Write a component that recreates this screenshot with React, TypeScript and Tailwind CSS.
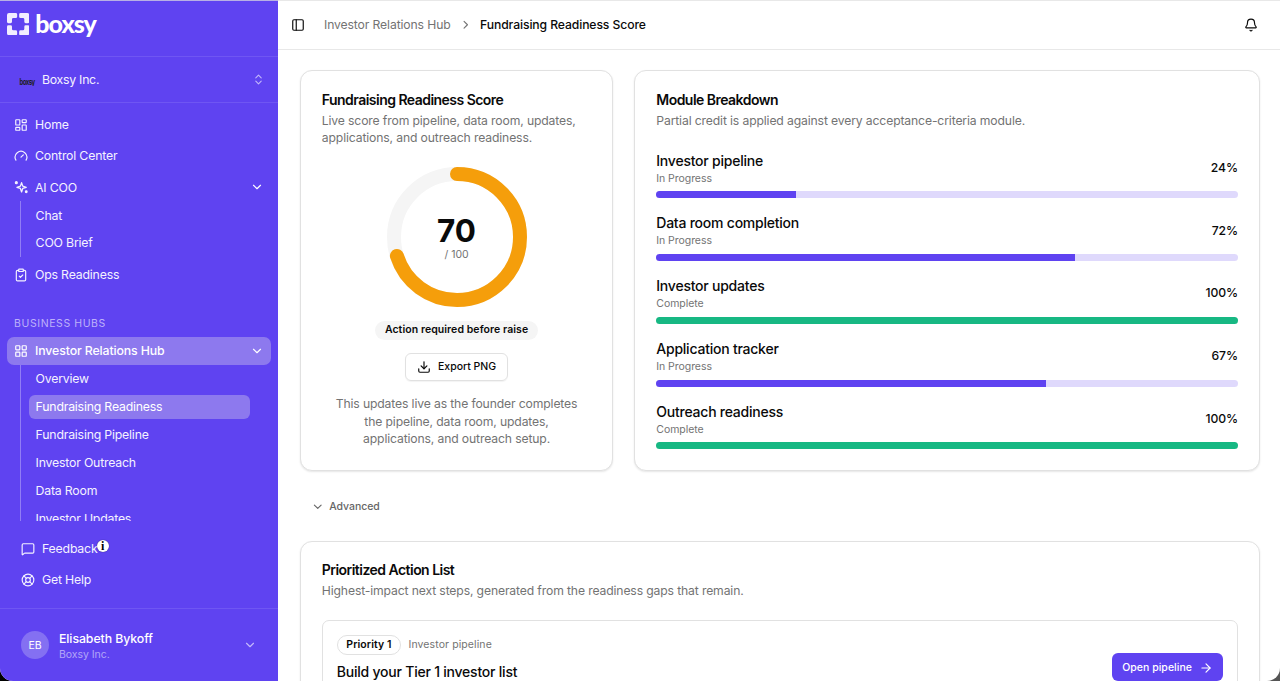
import {
  ArrowRight,
  Bell,
  ChevronDown,
  ChevronRight,
  ChevronsUpDown,
  ClipboardCheck,
  Download,
  Gauge,
  LayoutDashboard,
  LayoutGrid,
  LifeBuoy,
  MessageSquare,
  PanelLeft,
} from 'lucide-react';
import type { ReactNode } from 'react';

const modules = [
  { name: 'Investor pipeline', status: 'In Progress', value: 24 },
  { name: 'Data room completion', status: 'In Progress', value: 72 },
  { name: 'Investor updates', status: 'Complete', value: 100 },
  { name: 'Application tracker', status: 'In Progress', value: 67 },
  { name: 'Outreach readiness', status: 'Complete', value: 100 },
];

const hubLinks = [
  'Overview',
  'Fundraising Readiness',
  'Fundraising Pipeline',
  'Investor Outreach',
  'Data Room',
  'Investor Updates',
];

const BoxsyMark = () => (
  <svg viewBox="0 0 67 67" className="size-[22.3px]" fill="#f1eeff">
    {[0, 90, 180, 270].map((angle) => (
      <path
        key={angle}
        transform={`rotate(${angle} 33.5 33.5)`}
        d="M6 0H26Q30.5 0 30.5 4V11Q30.5 15 26 15H19Q15 15 15 19V26Q15 30.5 11 30.5H4Q0 30.5 0 26V6Q0 0 6 0Z"
      />
    ))}
  </svg>
);

const AiSparkle = () => (
  <svg viewBox="0 0 24 24" className="size-3.5" fill="none" stroke="currentColor" strokeWidth="2.2" strokeLinejoin="round" strokeLinecap="round">
    <path d="M13 4.5 15 10.5 21 12.5 15 14.5 13 20.5 11 14.5 5 12.5 11 10.5Z" />
    <circle cx="4" cy="4.5" r="1.6" fill="currentColor" />
    <circle cx="21" cy="20" r="1.4" fill="currentColor" />
  </svg>
);

interface NavRowProps {
  icon: ReactNode;
  label: string;
  active?: boolean;
  expandable?: boolean;
}

const NavRow = ({ icon, label, active, expandable }: NavRowProps) => (
  <div
    className={`flex h-7 shrink-0 items-center gap-[7px] rounded-[7px] px-[7px] text-[12.3px] ${
      active ? 'bg-[#8d79ee] font-medium tracking-[-0.11px] text-white' : 'tracking-[-0.19px] text-[#f4f2ff]'
    }`}
  >
    {icon}
    <span className="flex-1 pt-px">{label}</span>
    {expandable && <ChevronDown className="size-3.5 text-white" />}
  </div>
);

const SubLink = ({ label, active }: { label: string; active?: boolean }) => (
  <div
    className={`flex h-[24.4px] shrink-0 items-center rounded-[6px] px-[6.6px] pt-px text-[12.3px] tracking-[-0.2px] ${
      active ? 'bg-[#8d79ee] text-white' : 'text-[#f4f2ff]'
    }`}
  >
    {label}
  </div>
);

const Sidebar = () => (
  <aside className="flex h-full w-[278.4px] shrink-0 flex-col bg-[#5f43f1]">
    <div className="flex h-[57px] shrink-0 items-start gap-[6px] border-b border-[#6f56f3] pl-[7px] pt-[13px]">
      <BoxsyMark />
      <span className="-mt-[5px] font-['Lato',sans-serif] text-[25px] font-black leading-[30px] tracking-[-1px] text-white">boxsy</span>
    </div>

    <div className="flex h-[46px] shrink-0 items-center border-b border-[#6f56f3] pl-5 pr-[13px] text-[12.3px] text-[#f4f2ff]">
      <span className="flex w-[14px] justify-center">
        <span className="scale-y-150 pt-px text-[6px] font-bold tracking-[-0.6px] text-[#221f26]">boxsy</span>
      </span>
      <span className="ml-2 flex-1 pt-[2px] tracking-[-0.27px]">Boxsy Inc.</span>
      <ChevronsUpDown className="size-[13px] text-[#c3b8fb]" />
    </div>

    {/* Scrollable menu */}
    <nav className="flex h-[417.5px] shrink-0 flex-col overflow-hidden px-[7px] pt-[7.5px]">
      <div className="flex flex-col gap-[3.4px]">
        <NavRow icon={<LayoutDashboard className="size-3.5" />} label="Home" />
        <NavRow icon={<Gauge className="size-3.5" />} label="Control Center" />
        <NavRow icon={<AiSparkle />} label="AI COO" expandable />
      </div>
      <div className="ml-[13px] flex flex-col gap-[3.5px] border-l border-[#917df5] py-[1.8px] pl-[8px]">
        <SubLink label="Chat" />
        <SubLink label="COO Brief" />
      </div>
      <div className="mt-[3.4px]">
        <NavRow icon={<ClipboardCheck className="size-3.5" />} label="Ops Readiness" />
      </div>

      <div className="mt-[21px] flex h-[27.5px] shrink-0 items-center px-[7px] pt-[1.5px] text-[10.5px] tracking-[0.6px] text-[#bdb1fa]">
        BUSINESS HUBS
      </div>
      <NavRow icon={<LayoutGrid className="size-3.5" />} label="Investor Relations Hub" active expandable />
      <div className="ml-[13px] mr-[21px] flex flex-col gap-[3.5px] border-l border-[#917df5] py-[1.8px] pl-[8px]">
        {hubLinks.map((link) => (
          <SubLink key={link} label={link} active={link === 'Fundraising Readiness'} />
        ))}
      </div>
    </nav>

    <div className="flex h-[88px] shrink-0 flex-col gap-[3.4px] border-b border-[#6f56f3] px-[14px] pt-[14px]">
      <div className="relative">
        <NavRow icon={<MessageSquare className="size-3.5" />} label="Feedback" />
        <span className="absolute left-[82.5px] top-[5px] flex size-[12.5px] items-center justify-center rounded-full bg-white font-['Liberation_Serif',serif] text-[12px] font-bold leading-none text-black shadow-[0_0_1px_#1b1640]">
          i
        </span>
      </div>
      <NavRow icon={<LifeBuoy className="size-3.5" />} label="Get Help" />
    </div>

    <div className="flex h-[73px] items-center pl-[21px] pr-[21px]">
      <div className="flex size-7 items-center justify-center rounded-full bg-[#8470f2] pt-[1.5px] text-[10.5px] text-white">EB</div>
      <div className="ml-[10px] flex-1 pt-[3px]">
        <div className="text-[12.3px] font-medium leading-[16px] tracking-[-0.07px] text-white">Elisabeth Bykoff</div>
        <div className="text-[10.5px] leading-[15px] tracking-[-0.05px] text-[#b3a6f8]">Boxsy Inc.</div>
      </div>
      <ChevronDown className="size-3.5 text-[#c3b8fb]" />
    </div>
  </aside>
);

const ScoreRing = ({ score }: { score: number }) => {
  const length = 2 * Math.PI * 63;
  return (
    <div className="relative size-[140px]">
      <svg viewBox="0 0 140 140" className="size-full -rotate-90" fill="none" strokeWidth="14">
        <circle cx="70" cy="70" r="63" stroke="#f5f5f5" />
        <circle
          cx="70"
          cy="70"
          r="63"
          stroke="#f59e0b"
          strokeLinecap="round"
          strokeDasharray={`${(length * score) / 100} ${length}`}
        />
      </svg>
      <div className="absolute inset-0 flex flex-col items-center justify-center pt-[4px]">
        <span className="text-[31.4px] font-bold leading-[32px] text-[#0a0a0a]">{score}</span>
        <span className="text-[10.5px] leading-[15px] text-[#737373]">/ 100</span>
      </div>
    </div>
  );
};

const cardClass = 'rounded-[12px] border border-[#e1e1e1] bg-white shadow-[0_1px_2px_rgba(0,0,0,0.1)]';
const titleClass = 'text-[14px] font-semibold leading-[16px] tracking-[-0.53px] text-[#0a0a0a]';
const mutedClass = 'text-[12.2px] leading-[17.5px] tracking-[-0.14px] text-[#737373]';

export default function App() {
  return (
    <div className="h-[681px] w-[1280px] overflow-hidden bg-linear-to-r from-black to-[#555] font-['Inter',sans-serif]">
      <div className="relative flex h-full overflow-hidden rounded-b-[13px] bg-white">
        <Sidebar />

        <main className="flex min-w-0 flex-1 flex-col">
          <header className="flex h-[49.5px] shrink-0 items-center border-b-[1.5px] border-[#e8e8e8] pl-[12.6px] pr-[22px] pt-px text-[12.2px]">
            <PanelLeft className="size-3.5 text-[#0a0a0a]" />
            <span className="ml-[19px] tracking-[-0.12px] text-[#737373]">Investor Relations Hub</span>
            <ChevronRight className="mx-[8px] size-[13.5px] text-[#737373]" />
            <span className="flex-1 font-medium tracking-[-0.11px] text-[#0a0a0a]">Fundraising Readiness Score</span>
            <Bell className="size-3.5 text-[#0a0a0a]" />
          </header>

          <div className="flex shrink-0 gap-[21px] pl-[21.4px] pr-5 pt-[20.5px]">
            <section className={`${cardClass} flex h-[401px] w-[313.5px] shrink-0 flex-col items-center px-[21px] pt-[20.5px]`}>
              <div className="w-full">
                <h2 className={titleClass}>Fundraising Readiness Score</h2>
                <p className={`${mutedClass} mt-[4px]`}>
                  Live score from pipeline, data room, updates,
                  <br />
                  applications, and outreach readiness.
                </p>
              </div>
              <div className="mt-[20px]">
                <ScoreRing score={70} />
              </div>
              <div className="mt-[14px] flex h-[19px] items-center rounded-full bg-[#f5f5f5] px-[10px] pt-[0.5px] text-[10.5px] font-semibold tracking-[0.07px] text-[#0a0a0a]">
                Action required before raise
              </div>
              <button className="mt-[13.5px] flex h-[28px] shrink-0 items-center gap-[7px] rounded-[6px] border border-[#e1e1e1] px-[11px] pt-[0.5px] text-[10.5px] font-medium text-[#0a0a0a] shadow-[0_1px_1px_rgba(0,0,0,0.05)]">
                <Download className="size-3.5" />
                Export PNG
              </button>
              <p className={`${mutedClass} mt-[14px] text-center`}>
                This updates live as the founder completes
                <br />
                the pipeline, data room, updates,
                <br />
                applications, and outreach setup.
              </p>
            </section>

            <section className={`${cardClass} h-[401px] flex-1 px-[21px] pt-[20.5px]`}>
              <h2 className={titleClass}>Module Breakdown</h2>
              <p className={`${mutedClass} mt-[4px]`}>Partial credit is applied against every acceptance-criteria module.</p>
              <div className="mt-[21px] flex flex-col gap-[14px]">
                {modules.map((module) => (
                  <div key={module.name} className="h-[48.8px]">
                    <div className="flex h-[35px] items-center justify-between pt-px">
                      <div>
                        <div className="text-[14px] font-medium leading-[20px] tracking-[-0.23px] text-[#0a0a0a]">{module.name}</div>
                        <div className="text-[10.5px] leading-[15px] tracking-[-0.05px] text-[#737373]">{module.status}</div>
                      </div>
                      <span className="text-[12.2px] font-medium tracking-[-0.1px] text-[#0a0a0a]">{module.value}%</span>
                    </div>
                    <div className="mt-[6.3px] h-[7px] overflow-hidden rounded-full bg-[#dfd9fc]">
                      <div
                        className={module.value === 100 ? 'h-full bg-[#17b883]' : 'h-full bg-[#5f43f1]'}
                        style={{ width: `${module.value}%` }}
                      />
                    </div>
                  </div>
                ))}
              </div>
            </section>
          </div>

          <div className="mt-[28.5px] flex h-[14px] shrink-0 items-center gap-[5px] pl-[32.4px] text-[10.5px] font-medium text-[#666]">
            <ChevronDown className="size-[13.5px]" />
            <span className="pt-px tracking-[-0.05px]">Advanced</span>
          </div>

          <section className={`${cardClass} ml-[21.4px] mr-5 mt-[27.5px] h-[300px] shrink-0 px-[21px] pt-[20px]`}>
            <h2 className={titleClass}>Prioritized Action List</h2>
            <p className={`${mutedClass} mt-[4px]`}>Highest-impact next steps, generated from the readiness gaps that remain.</p>
            <div className="mt-[20.5px] flex h-[200px] justify-between rounded-[7px] border border-[#e1e1e1] px-[14px] pt-[14px]">
              <div>
                <div className="flex items-center gap-[7.5px]">
                  <span className="flex h-[20px] items-center rounded-full border border-[#e1e1e1] px-[8.5px] text-[10.5px] font-semibold tracking-[0.08px] text-[#0a0a0a]">
                    Priority 1
                  </span>
                  <span className="text-[10.5px] tracking-[0.1px] text-[#737373]">Investor pipeline</span>
                </div>
                <div className="mt-[6.5px] text-[14px] font-medium leading-[20px] tracking-[-0.22px] text-[#0a0a0a]">
                  Build your Tier 1 investor list
                </div>
              </div>
              <button className="mt-[18px] flex h-[28px] items-center gap-[7px] rounded-[6px] bg-[#5f43f1] px-[10px] pt-px text-[10.5px] font-medium tracking-[0.03px] text-white">
                Open pipeline
                <ArrowRight className="size-3.5" />
              </button>
            </div>
          </section>
        </main>

        {/* Thin window edge */}
        <div className="absolute inset-x-0 top-0 h-px bg-[#dedede]/70"></div>
      </div>
    </div>
  );
}
